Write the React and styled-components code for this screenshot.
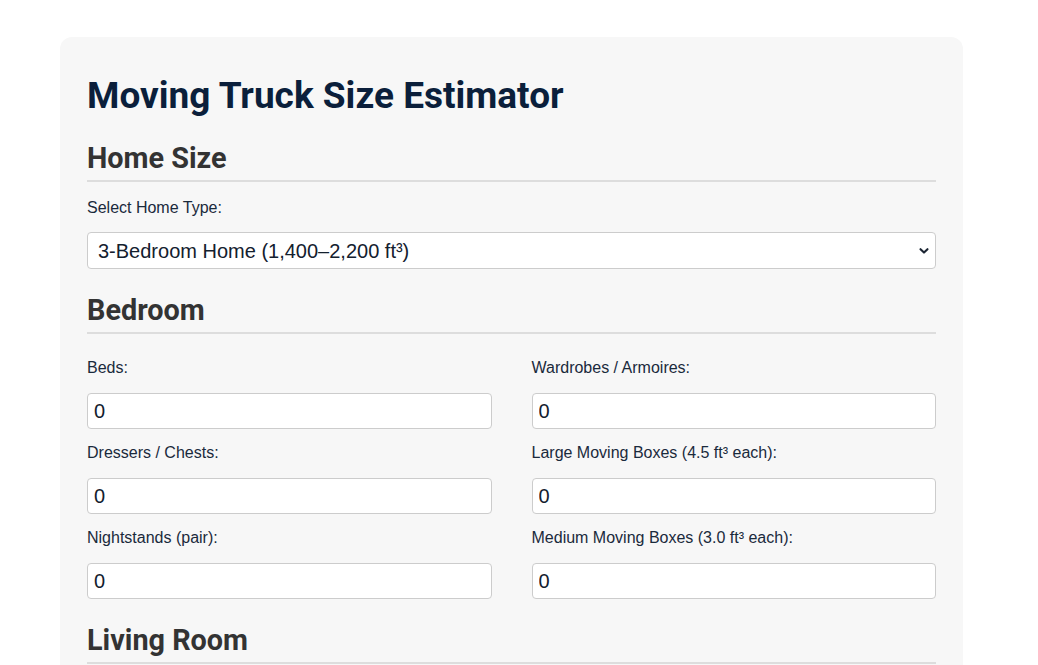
import React from "react";
import styled, { createGlobalStyle } from "styled-components";

const Global = createGlobalStyle`
  html, body { margin: 0; padding: 0; background: #ffffff; }
  body { font-family: "Liberation Sans", Arial, sans-serif; }
  * { box-sizing: border-box; }
`;

const Card = styled.div`
  width: 903px;
  margin: 37px 0 0 60px;
  padding: 27px 27px 40px;
  background: #f7f7f7;
  border-radius: 12px;
`;

const Title = styled.h1`
  margin: 10px 0 0;
  font-family: Roboto, "Noto Sans", sans-serif;
  font-weight: 700;
  font-size: 37px;
  line-height: 44px;
  color: #0b1f3b;
`;

const SectionTitle = styled.h2`
  margin: ${(p) => p.$top}px 0 0;
  padding-bottom: 5px;
  font-family: Roboto, "Noto Sans", sans-serif;
  font-weight: 700;
  font-size: 28.8px;
  line-height: 33px;
  color: #333333;
  border-bottom: 2px solid #dddddd;
`;

const Label = styled.label`
  display: block;
  font-family: "Liberation Sans", Arial, sans-serif;
  font-size: 16px;
  line-height: 18px;
  color: #1a2a3c;
  margin-bottom: ${(p) => p.$gap}px;
`;

const SelectWrap = styled.div`
  position: relative;
  margin-top: 17px;
`;

const Select = styled.select`
  display: block;
  width: 100%;
  height: 37px;
  appearance: none;
  -webkit-appearance: none;
  padding: 0 30px 0 10px;
  font-family: "Liberation Sans", Arial, sans-serif;
  font-size: 20px;
  color: #13202e;
  background: #ffffff;
  border: 1px solid #cccccc;
  border-radius: 4px;
  outline: none;
`;

const Chevron = styled.svg`
  position: absolute;
  right: 6px;
  bottom: 12px;
  width: 12px;
  height: 12px;
  pointer-events: none;
`;

const Grid = styled.div`
  display: grid;
  grid-template-columns: 1fr 1fr;
  column-gap: 40px;
  row-gap: 15px;
  margin-top: 25px;
`;

const Field = styled.div`
  display: flex;
  flex-direction: column;
`;

const Input = styled.input`
  display: block;
  width: 100%;
  height: 36px;
  padding: 0 6px;
  font-family: "Liberation Sans", Arial, sans-serif;
  font-size: 20px;
  color: #13202e;
  background: #ffffff;
  border: 1px solid #cccccc;
  border-radius: 4px;
  outline: none;
`;

const fields = [
  "Beds:",
  "Wardrobes / Armoires:",
  "Dressers / Chests:",
  "Large Moving Boxes (4.5 ft³ each):",
  "Nightstands (pair):",
  "Medium Moving Boxes (3.0 ft³ each):",
];

export default function App() {
  return (
    <>
      <Global />
      <Card>
        <Title>Moving Truck Size Estimator</Title>

        <SectionTitle $top={24}>Home Size</SectionTitle>
        <SelectWrap>
          <Label $gap={15} htmlFor="hometype">Select Home Type:</Label>
          <Select id="hometype" defaultValue="3br">
            <option value="studio">Studio Apartment (250–400 ft³)</option>
            <option value="1br">1-Bedroom Apartment (400–800 ft³)</option>
            <option value="2br">2-Bedroom Home (800–1,400 ft³)</option>
            <option value="3br">3-Bedroom Home (1,400–2,200 ft³)</option>
            <option value="4br">4+ Bedroom Home (2,200+ ft³)</option>
          </Select>
          <Chevron viewBox="0 0 12 12">
            <path d="M2.5 4.2 L6 7.6 L9.5 4.2" fill="none" stroke="#1b2533" strokeWidth="2.1" strokeLinecap="round" strokeLinejoin="round" />
          </Chevron>
        </SelectWrap>

        <SectionTitle $top={25}>Bedroom</SectionTitle>
        <Grid>
          {fields.map((f) => (
            <Field key={f}>
              <Label $gap={16}>{f}</Label>
              <Input type="number" defaultValue="0" />
            </Field>
          ))}
        </Grid>

        <SectionTitle $top={25}>Living Room</SectionTitle>
      </Card>
    </>
  );
}
